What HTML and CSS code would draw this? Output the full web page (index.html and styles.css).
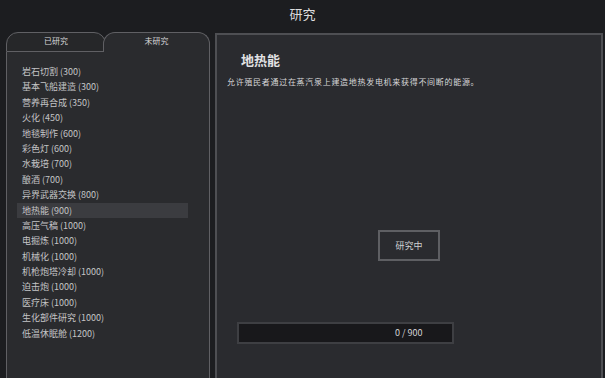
FILE: index.html
```html
<!DOCTYPE html>
<html lang="zh">
<head>
  <meta charset="UTF-8">
  <title>研究</title>
  <link rel="stylesheet" href="styles.css">
</head>
<body>

  <div class="title">研究</div>

  <div class="main">
    <div class="left">
      <div class="tabs">
        <div class="tab">已研究</div>
        <div class="tab active">未研究</div>
      </div>
      <div class="list">
        <div class="item">岩石切割 (300)</div>
        <div class="item">基本飞船建造 (300)</div>
        <div class="item">营养再合成 (350)</div>
        <div class="item">火化 (450)</div>
        <div class="item">地毯制作 (600)</div>
        <div class="item">彩色灯 (600)</div>
        <div class="item">水栽培 (700)</div>
        <div class="item">酿酒 (700)</div>
        <div class="item">异界武器交换 (800)</div>
        <div class="item selected">地热能 (900)</div>
        <div class="item">高压气稿 (1000)</div>
        <div class="item">电掘炼 (1000)</div>
        <div class="item">机械化 (1000)</div>
        <div class="item">机枪炮塔冷却 (1000)</div>
        <div class="item">迫击炮 (1000)</div>
        <div class="item">医疗床 (1000)</div>
        <div class="item">生化部件研究 (1000)</div>
        <div class="item">低温休眠舱 (1200)</div>
      </div>
    </div>

    <div class="detail">
      <h2>地热能</h2>
      <p class="desc">允许殖民者通过在蒸汽泉上建造地热发电机来获得不间断的能源。</p>
      <div class="btn">研究中</div>
      <div class="bar"><span>0 / 900</span></div>
    </div>
  </div>

</body>
</html>
```

FILE: styles.css
```css
body {
  margin: 0;
  width: 605px;
  height: 378px;
  overflow: hidden;
  background: #1c1d20;
  color: #d2d2d4;
  font-family: "Noto Sans CJK SC", "Noto Sans", sans-serif;
}
.title {
  height: 32px;
  line-height: 27px;
  text-align: center;
  font-size: 13px;
  color: #dcdcde;
}
.main {
  display: flex;
  height: 346px;
  padding-left: 6px;
  padding-right: 2px;
}
.left {
  width: 204px;
  display: flex;
  flex-direction: column;
}
.tabs {
  display: flex;
  height: 20px;
}
.tab {
  width: 100px;
  box-sizing: border-box;
  border: 1px solid #606064;
  border-radius: 12px 12px 0 0;
  background: #262729;
  font-size: 8px;
  line-height: 16px;
  text-align: center;
  color: #d8d8da;
}
.tab.active {
  flex: 1;
  margin-left: -3px;
  border-bottom: none;
  background: #2a2b2e;
}
.list {
  flex: 1;
  background: #2a2b2e;
  border-left: 1px solid #606064;
  border-right: 1px solid #606064;
  padding-top: 12px;
}
.item {
  margin-left: 10px;
  width: 171px;
  padding-left: 5px;
  box-sizing: border-box;
  height: 15.4px;
  line-height: 15.4px;
  font-size: 9px;
  color: #c4c4c6;
}
.item.selected {
  background: #3b3c40;
}
.detail {
  flex: 1;
  margin-left: 5px;
  margin-top: 1px;
  background: #2a2b2f;
  border: 2px solid #4e4f53;
  border-bottom: none;
  padding: 0 10px;
  display: flex;
  flex-direction: column;
}
.detail h2 {
  margin: 16px 0 0 14px;
  font-size: 13px;
  font-weight: bold;
  line-height: 18px;
  color: #e2e2e4;
}
.desc {
  margin: 7px 0 0;
  font-size: 8px;
  line-height: 12px;
  letter-spacing: 0.7px;
  color: #d6d6d8;
}
.btn {
  align-self: center;
  margin-top: 142px;
  width: 62px;
  height: 31px;
  box-sizing: border-box;
  border: 2px solid #5e5f63;
  font-size: 9px;
  line-height: 27px;
  text-align: center;
  color: #cfcfd1;
}
.bar {
  margin: 61px 0 0 10px;
  width: 217px;
  height: 22px;
  box-sizing: border-box;
  background: #18181b;
  border: 2px solid #3e3f43;
  font-size: 9px;
  line-height: 18px;
  color: #d4d4d6;
  padding-left: 156px;
}
```
